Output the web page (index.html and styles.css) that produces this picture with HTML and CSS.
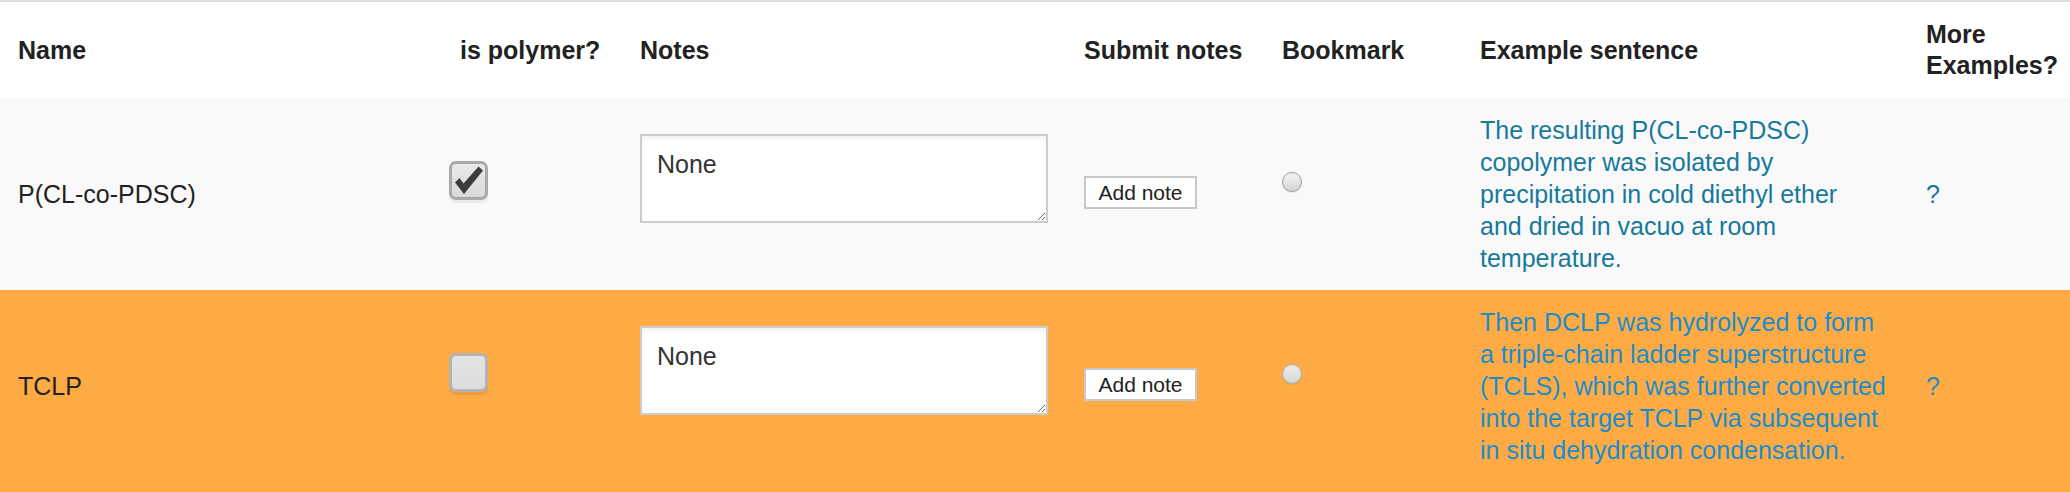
FILE: index.html
```html
<!DOCTYPE html>
<html>
<head>
<meta charset="utf-8">
<link rel="stylesheet" href="styles.css">
</head>
<body>
<table class="terms">
  <colgroup>
    <col class="c-name"><col class="c-poly"><col class="c-notes"><col class="c-submit"><col class="c-book"><col class="c-example"><col class="c-more">
  </colgroup>
  <thead>
    <tr>
      <th>Name</th>
      <th>is polymer?</th>
      <th>Notes</th>
      <th>Submit notes</th>
      <th>Bookmark</th>
      <th>Example sentence</th>
      <th>More Examples?</th>
    </tr>
  </thead>
  <tbody>
    <tr class="row-plain">
      <td>P(CL-co-PDSC)</td>
      <td><span class="check is-checked"><svg viewBox="0 0 33 33" width="33" height="33"><path d="M3 18.5 L7.5 14 L11.5 19.5 L26.5 2.5 L31 6.5 L12 30 Z" fill="#3c3c3c"/></svg></span></td>
      <td><textarea class="note">None</textarea></td>
      <td><button class="add-note">Add note</button></td>
      <td><span class="radio"></span></td>
      <td class="sentence">The resulting P(CL-co-PDSC)<br>copolymer was isolated by<br>precipitation in cold diethyl ether<br>and dried in vacuo at room<br>temperature.</td>
      <td class="more">?</td>
    </tr>
    <tr class="row-hl">
      <td>TCLP</td>
      <td><span class="check"></span></td>
      <td><textarea class="note">None</textarea></td>
      <td><button class="add-note">Add note</button></td>
      <td><span class="radio"></span></td>
      <td class="sentence">Then DCLP was hydrolyzed to form<br>a triple-chain ladder superstructure<br>(TCLS), which was further converted<br>into the target TCLP via subsequent<br>in situ dehydration condensation.</td>
      <td class="more">?</td>
    </tr>
  </tbody>
</table>
</body>
</html>
```

FILE: styles.css
```css
html, body {
  margin: 0;
  padding: 0;
  background: #ffffff;
}

body {
  font-family: "Liberation Sans", Arial, Helvetica, sans-serif;
  font-size: 25px;
  color: #222222;
}

.terms {
  width: 2070px;
  border-collapse: collapse;
  table-layout: fixed;
  border-top: 2px solid #dddddd;
}

.c-name { width: 442px; }
.c-poly { width: 180px; }
.c-notes { width: 444px; }
.c-submit { width: 198px; }
.c-book { width: 198px; }
.c-example { width: 446px; }
.c-more { width: 162px; }

.terms th {
  text-align: left;
  font-weight: bold;
  line-height: 31px;
  padding: 17px 18px;
  vertical-align: middle;
  color: #222222;
  background: #ffffff;
}

.terms td {
  padding: 16px 18px;
  line-height: 32px;
  vertical-align: middle;
}

.row-plain td {
  background: #f9f9f9;
}

.row-hl td {
  background: #ffab45;
  padding-bottom: 26px;
}

.check {
  display: block;
  box-sizing: border-box;
  width: 39px;
  height: 39px;
  margin: 0 0 27px -11px;
  border: 3px solid #a9a9a9;
  border-radius: 7px;
  background: linear-gradient(#e9e9e9, #d9d9d9);
  box-shadow: 0 3px 0 rgba(0, 0, 0, 0.06);
}

.check svg {
  display: block;
}

.row-hl .check {
  border-color: #b3b3b3;
  background: linear-gradient(#e4e4e4, #dcdcdc);
  box-shadow: 0 3px 0 rgba(120, 60, 0, 0.12);
}

.note {
  display: block;
  box-sizing: border-box;
  width: 408px;
  height: 89px;
  margin: 0 0 31px 0;
  padding: 12px 15px;
  border: 2px solid #cccccc;
  border-radius: 0;
  background: #ffffff;
  box-shadow: inset 0 3px 3px rgba(0, 0, 0, 0.05);
  font-family: "Liberation Sans", Arial, sans-serif;
  font-size: 25px;
  line-height: 32px;
  color: #333333;
  resize: both;
}

.add-note {
  display: block;
  box-sizing: border-box;
  width: 113px;
  height: 33px;
  margin: 0 0 3px 0;
  padding: 0;
  border: 2px solid #c8c8c8;
  border-radius: 0;
  background: #ffffff;
  font-family: "Liberation Sans", Arial, sans-serif;
  font-size: 21px;
  line-height: 29px;
  color: #222222;
  text-align: center;
}

.radio {
  display: block;
  box-sizing: border-box;
  width: 20px;
  height: 20px;
  margin: 0 0 24px 0;
  border: 1px solid #9c9c9c;
  border-radius: 50%;
  background: linear-gradient(#f4f4f4, #d4d4d4);
  box-shadow: 0 1px 1px rgba(0, 0, 0, 0.08);
}

.row-hl .radio {
  border-color: #a8a8a8;
  background: linear-gradient(#ececec, #d6d6d6);
}

.sentence,
.more {
  color: #17799c;
}

.row-hl .sentence,
.row-hl .more {
  color: #1c8dca;
}
```
